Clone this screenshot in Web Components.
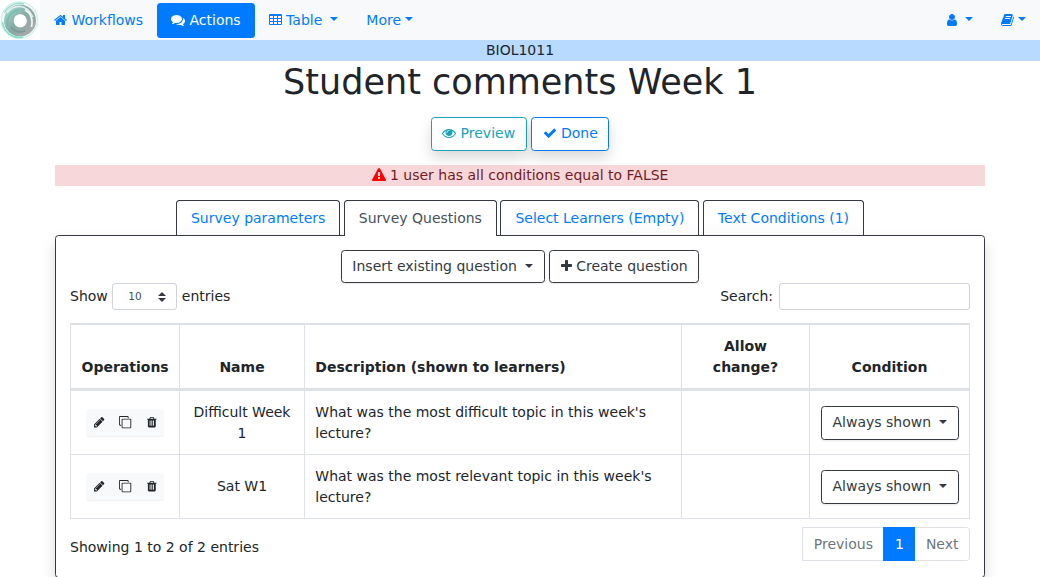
<!DOCTYPE html>
<html lang="en">
<head>
<meta charset="utf-8">
<title>Student comments Week 1</title>
<style>
html{font-size:14px}
body{margin:0;font:14px/1.5 "DejaVu Sans",sans-serif;color:#212529;background:#fff;overflow:hidden}
</style>
</head>
<body>
<app-page></app-page>
<script>
const define = (name, html, setup) => customElements.define(name, class extends HTMLElement {
  connectedCallback() {
    if (this.shadowRoot) return;
    const t = document.createElement('template');
    t.innerHTML = '<style>*{box-sizing:border-box}:host{box-sizing:border-box}</style>' + html;
    this.attachShadow({ mode: 'open' }).append(t.content.cloneNode(true));
    if (setup) setup(this, this.shadowRoot);
  }
});

// Glyphs: left edge, advance width (in 1792 units per em), markup
const ICONS = {
  home: [64, 1664, '<path d="M1472 992v480q0 26-19 45t-45 19h-384v-384h-256v384h-384q-26 0-45-19t-19-45v-480q0-1 .5-3t.5-3l575-474 575 474q1 2 1 6zm223-69l-62 74q-8 9-21 11h-3q-13 0-21-7l-692-577-692 577q-12 8-24 7-13-2-21-11l-62-74q-8-10-7-23.5t11-21.5l719-599q32-26 76-26t76 26l244 204v-195q0-14 9-23t23-9h192q14 0 23 9t9 23v408l219 182q10 8 11 21.5t-7 23.5z"/>'],
  comments: [0, 1792, '<path d="M1408 768q0 139-94 257t-256.5 186.5-353.5 68.5q-86 0-176-16-124 88-278 128-36 9-86 16h-3q-11 0-20.5-8t-11.5-21q-1-3-1-6.5t.5-6.5 2-6l2.5-5 3.5-5.5 4-5 4.5-5 4-4.5q5-6 23-25t26-29.5 22.5-29 25-38.5 20.5-44q-124-72-195-177t-71-224q0-139 94-257t256.5-186.5 353.5-68.5 353.5 68.5 256.5 186.5 94 257zm384 256q0 120-71 224.5t-195 176.5q10 24 20.5 44t25 38.5 22.5 29 26 29.5 23 25q1 1 4 4.5t4.5 5 4 5 3.5 5.5l2.5 5t2 6 .5 6.5-1 6.5q-3 14-13 22t-22 7q-50-7-86-16-154-40-278-128-90 16-176 16-271 0-472-132 58 4 88 4 161 0 309-45t264-129q125-92 192-212t67-254q0-77-23-152 129 71 204 178t75 230z"/>'],
  table: [64, 1664, '<path fill-rule="evenodd" d="M224 128h1344q66 0 113 47t47 113v1088q0 66-47 113t-113 47h-1344q-66 0-113-47t-47-113v-1088q0-66 47-113t113-47zM192 384v256h384v-256zM704 384v256h384v-256zM1216 384v256h384v-256zM192 768v256h384v-256zM704 768v256h384v-256zM1216 768v256h384v-256zM192 1152v256h384v-256zM704 1152v256h384v-256zM1216 1152v256h384v-256z"/>'],
  user: [256, 1280, '<path d="M1536 1399q0 109-62.5 187t-150.5 78h-854q-88 0-150.5-78t-62.5-187q0-85 8.5-160.5t31.5-152 58.5-131 94-89 134.5-34.5q131 128 313 128t313-128q76 0 134.5 34.5t94 89 58.5 131 31.5 152 8.5 160.5zm-256-887q0 159-112.5 271.5t-271.5 112.5-271.5-112.5-112.5-271.5 112.5-271.5 271.5-112.5 271.5 112.5 112.5 271.5z"/>'],
  book: [64, 1664, '<path d="M1703 478q40 57 18 129l-275 906q-19 64-76.5 107.5t-122.5 43.5h-923q-77 0-148.5-53.5t-99.5-131.5q-24-67-2-127 0-4 3-27t4-37q1-8-3-21.5t-3-19.5q2-11 8-21t16.5-23.5 16.5-23.5q23-38 45-91.5t30-91.5q3-10 .5-30t-.5-28q3-11 17-28t17-23q21-36 42-92t25-90q1-9-2.5-32t.5-28q4-13 22-30.5t22-22.5q19-26 42.5-84.5t27.5-96.5q1-8-3-25.5t-2-26.5q2-8 9-18t18-23 17-21q8-12 16.5-30.5t15-35 16-36 19.5-32 26.5-23.5 36-11.5 47.5 5.5l-1 3q38-9 51-9h761q74 0 114 56t18 130l-274 906q-36 119-71.5 153.5t-128.5 34.5h-869q-27 0-38 15-11 16-1 43 24 70 144 70h923q29 0 56-15.5t35-41.5l300-987q7-22 5-57 38 15 59 43zm-1064 2q-4 13 2 22.5t20 9.5h608q13 0 25.5-9.5t16.5-22.5l21-64q4-13-2-22.5t-20-9.5h-608q-13 0-25.5 9.5t-16.5 22.5zm-83 256q-4 13 2 22.5t20 9.5h608q13 0 25.5-9.5t16.5-22.5l21-64q4-13-2-22.5t-20-9.5h-608q-13 0-25.5 9.5t-16.5 22.5z"/>'],
  eye: [0, 1792, '<path d="M1664 960q-152-236-381-353 61 104 61 225 0 185-131.5 316.5t-316.5 131.5-316.5-131.5-131.5-316.5q0-121 61-225-229 117-381 353 133 205 333.5 326.5t434.5 121.5 434.5-121.5 333.5-326.5zm-720-384q0-20-14-34t-34-14q-125 0-214.5 89.5t-89.5 214.5q0 20 14 34t34 14 34-14 14-34q0-86 61-147t147-61q20 0 34-14t14-34zm848 384q0 34-20 69-140 230-376.5 368.5t-499.5 138.5-499.5-139-376.5-368q-20-35-20-69t20-69q140-229 376.5-368t499.5-139 499.5 139 376.5 368q20 35 20 69z"/>'],
  check: [0, 1792, '<path d="M1671 566q0 40-28 68l-724 724-136 136q-28 28-68 28t-68-28l-136-136-362-362q-28-28-28-68t28-68l136-136q28-28 68-28t68 28l294 295 656-657q28-28 68-28t68 28l136 136q28 28 28 68z"/>'],
  warning: [0, 1792, '<path d="M1024 1375v-190q0-14-9.5-23.5t-22.5-9.5h-192q-13 0-22.5 9.5t-9.5 23.5v190q0 14 9.5 23.5t22.5 9.5h192q13 0 22.5-9.5t9.5-23.5zm-2-374l18-459q0-12-10-19-13-11-24-11h-220q-11 0-24 11-10 7-10 21l17 457q0 10 10 16.5t24 6.5h185q14 0 23.5-6.5t10.5-16.5zm-14-934l768 1408q35 63-2 126-17 29-46.5 46t-63.5 17h-1536q-34 0-63.5-17t-46.5-46q-37-63-2-126l768-1408q17-31 47-49t65-18 65 18 47 49z"/>'],
  plus: [192, 1408, '<path d="M1600 736v192q0 40-28 68t-68 28h-416v416q0 40-28 68t-68 28h-192q-40 0-68-28t-28-68v-416h-416q-40 0-68-28t-28-68v-192q0-40 28-68t68-28h416v-416q0-40 28-68t68-28h192q40 0 68 28t28 68v416h416q40 0 68 28t28 68z"/>'],
  pencil: [128, 1536, '<path d="M491 1536l91-91-235-235-91 91v107h128v128h107zm523-928q0-22-22-22-10 0-17 7l-542 542q-7 7-7 17 0 22 22 22 10 0 17-7l542-542q7-7 7-17zm-54-192l416 416-832 832h-416v-416zm683 96q0 53-37 90l-166 166-416-416 166-165q36-38 90-38 53 0 91 38l235 234q37 39 37 91z"/>'],
  clone: [0, 1792, '<path fill-rule="evenodd" d="M544 384h1088q66 0 113 47t47 113v1088q0 66-47 113t-113 47h-1088q-66 0-113-47t-47-113v-1088q0-66 47-113t113-47zM544 512q-32 0-32 32v1088q0 32 32 32h1088q32 0 32-32v-1088q0-32-32-32z"/><path d="M1408 160v160h-128v-160q0-32-32-32h-1088q-32 0-32 32v1088q0 32 32 32h160v128h-160q-66 0-113-47t-47-113v-1088q0-66 47-113t113-47h1088q66 0 113 47t47 113z"/>'],
  trash: [192, 1408, '<path d="M704 1376v-704q0-14-9-23t-23-9h-64q-14 0-23 9t-9 23v704q0 14 9 23t23 9h64q14 0 23-9t9-23zm256 0v-704q0-14-9-23t-23-9h-64q-14 0-23 9t-9 23v704q0 14 9 23t23 9h64q14 0 23-9t9-23zm256 0v-704q0-14-9-23t-23-9h-64q-14 0-23 9t-9 23v704q0 14 9 23t23 9h64q14 0 23-9t9-23zm-544-992h448l-48-117q-7-9-17-11h-317q-10 2-17 11zm928 32v64q0 14-9 23t-23 9h-96v948q0 83-47 143.5t-113 60.5h-832q-66 0-113-58.5t-47-141.5v-952h-96q-14 0-23-9t-9-23v-64q0-14 9-23t23-9h309l70-167q15-37 54-63t79-26h320q40 0 79 26t54 63l70 167h309q14 0 23 9t9 23z"/>']
};

define('fa-icon', `<style>:host{display:inline-block;line-height:1;height:1em;vertical-align:-.143em}svg{display:block;height:1em;fill:currentColor;overflow:visible}</style><div></div>`, (el, root) => {
  const [x, w, d] = ICONS[el.getAttribute('name')];
  root.querySelector('div').innerHTML = `<svg style="width:${w / 1792}em" viewBox="${x} 0 ${w} 1792">${d}</svg>`;
});

define('drop-caret', `<style>:host{display:inline-block;margin-left:.255em;margin-right:var(--caret-end,.4px);vertical-align:var(--caret-rise,.255em);border-top:.3em solid;border-left:.3em solid transparent;border-right:.3em solid transparent}</style>`);

define('brand-logo', `<style>:host{display:block;width:40px;height:40px;background:#fff}svg{display:block}</style>
<svg width="40" height="40" viewBox="0 0 40 40" fill="none">
<defs><linearGradient id="g" x1="0" y1="0" x2="1" y2="1"><stop offset="0" stop-color="#a3cfc6"/><stop offset=".5" stop-color="#86aaa4"/><stop offset="1" stop-color="#a9a9ab"/></linearGradient></defs>
<circle cx="19.500" cy="20" r="18" stroke="#d3f0ea" stroke-width="1.600"/>
<circle cx="20" cy="20.500" r="11" stroke="url(#g)" stroke-width="10"/>
<path d="M4.500 13A16.500 16.500 0 0 1 24 4" stroke="#9fdccf" stroke-width="1.500"/>
<path d="M2.500 22A17.500 17.500 0 0 0 23 37.300" stroke="#7de0cc" stroke-width="1.500"/>
<path d="M7 13Q12 6 20 6.500T33 17" stroke="#e3f3f0" stroke-width="1.400"/>
<path d="M8 27A13 13 0 0 1 19 10" stroke="#62c4b1" stroke-width="1.300"/>
<path d="M25 10Q34 15 31.500 27" stroke="#f2f8f7" stroke-width="1.700"/>
<path d="M11 27Q16 34 25 31" stroke="#7b9994" stroke-width="1.600"/>
<circle cx="20.300" cy="20.800" r="6.600" fill="#fff"/>
</svg>`);

define('nav-link', `<style>:host{display:block;padding:7px 14px;color:#007bff;white-space:nowrap;border-radius:3.5px}:host([active]){background:#007bff;color:#fff}</style><slot></slot>`);

define('nav-bar', `<style>:host{display:flex;height:40px;background:#f8f9fa;align-items:center;--caret-end:0px}.end{margin-left:auto;display:flex}</style>
<brand-logo></brand-logo>
<nav-link><fa-icon name="home"></fa-icon> Workflows</nav-link>
<nav-link active><fa-icon name="comments"></fa-icon> Actions</nav-link>
<nav-link><fa-icon name="table"></fa-icon> Table <drop-caret></drop-caret></nav-link>
<nav-link>More<drop-caret></drop-caret></nav-link>
<div class="end"><nav-link><fa-icon name="user"></fa-icon> <drop-caret></drop-caret></nav-link><nav-link><fa-icon name="book"></fa-icon><drop-caret></drop-caret></nav-link></div>`);

define('ui-button', `<style>:host{display:inline-block;height:var(--button-height,33.5px);padding:5.25px 10.5px;border:1px solid;border-radius:3.5px;color:#343a40;background:#fff;white-space:nowrap;vertical-align:middle;box-shadow:0 1px 2px rgba(0,0,0,.09)}
:host([kind=info]){color:#17a2b8}:host([kind=primary]){color:#007bff}:host([raised]){box-shadow:0 7px 14px rgba(0,0,0,.15)}</style><slot></slot>`);

define('alert-bar', `<style>:host{display:block;text-align:center;background:#f8d7da;color:#721c24}fa-icon{color:red}</style><fa-icon name="warning"></fa-icon> <slot></slot>`);

define('tab-item', `<style>:host{display:block;height:35px;padding:7px 14px 6px;border:1px solid #343a40;border-bottom:0;border-radius:3.5px 3.5px 0 0;color:#007bff;background:linear-gradient(#fff 60%,#fafafa);white-space:nowrap}
:host([active]){color:#495057;background:#fff;height:36px;position:relative;z-index:1}</style><slot></slot>`);
define('tab-bar', `<style>:host{display:flex;justify-content:center;gap:3.5px;height:35px}</style><slot></slot>`);

define('page-size', `<style>:host{display:flex;align-items:center;gap:4.5px}.s{display:flex;align-items:center;justify-content:space-between;width:65px;height:27px;border:1px solid #ced4da;border-radius:3px;padding:1px 10px 0 15px;font-size:10.500px;color:#495057}svg{display:block}</style>
<span>Show</span><span class="s">10<svg width="8" height="10" viewBox="0 0 4 5"><path fill="#343a40" d="M2 0L0 2h4zm0 5L0 3h4z"/></svg></span><span>entries</span>`);
define('search-box', `<style>:host{display:flex;align-items:center;gap:6px}input{width:191px;height:27px;border:1px solid #ced4da;border-radius:3px;background:#fff;padding:3px 7px;font:inherit;margin:0}</style><span>Search:</span><input aria-label="Search">`);

define('row-tools', `<style>:host{display:inline-flex;font-size:12.250px;line-height:18.375px;background:#f8f9fa;border-radius:3px;box-shadow:0 1px 1px rgba(0,0,0,.06);vertical-align:middle;white-space:nowrap}span{padding:4.500px 8px}span+span{margin-left:-1px}</style>
<span><fa-icon name="pencil"></fa-icon></span><span><fa-icon name="clone"></fa-icon></span><span><fa-icon name="trash"></fa-icon></span>`);

define('question-table', `<style>:host{display:block}ui-button{--button-height:34px;--caret-end:.8px;--caret-rise:.2em}
table{border-collapse:separate;border-spacing:0;width:900px;table-layout:fixed;border:1px solid #dee2e6;font:inherit;color:inherit}
th,td{padding:10.500px;border:0 solid #dee2e6;border-top-width:1px;border-right-width:1px;text-align:center;vertical-align:middle}
th{vertical-align:bottom;border-bottom-width:2px;height:66px}td{height:64px}td:last-child{padding:9px 10px 9px 11px}
th:last-child,td:last-child{border-right-width:0}th.l,td.l{text-align:left;padding-left:10.300px}</style>
<table><colgroup><col style="width:109px"><col style="width:125px"><col style="width:377px"><col style="width:128px"><col style="width:159px"></colgroup>
<thead><tr><th>Operations</th><th>Name</th><th class="l">Description (shown to learners)</th><th>Allow change?</th><th>Condition</th></tr></thead>
<tbody></tbody></table>`, (el, root) => {
  const rows = [['Difficult Week 1', "What was the most difficult topic in this week's lecture?"], ['Sat W1', "What was the most relevant topic in this week's lecture?"]];
  root.querySelector('tbody').innerHTML = rows.map(([n, d]) => `<tr><td><row-tools></row-tools></td><td>${n}</td><td class="l">${d}</td><td></td><td><ui-button>Always shown <drop-caret></drop-caret></ui-button></td></tr>`).join('');
});

define('page-nav', `<style>:host{display:flex;line-height:17.500px}span{padding:7.500px 10.500px 6.500px;border:1px solid #dee2e6;color:#6c757d;background:#fff}span+span{margin-left:-1px}.on{background:#007bff;border-color:#007bff;color:#fff;z-index:1}span:first-child{border-radius:3.500px 0 0 3.500px}span:last-child{border-radius:0 3.500px 3.500px 0}</style><span>Previous</span><span class="on">1</span><span>Next</span>`);

define('question-panel', `<style>:host{display:block;height:343px;padding:14px;border:1px solid #343a40;border-radius:3.500px;background:#fff;box-shadow:0 7px 14px rgba(0,0,0,.15)}
.actions{text-align:center;height:33px;--button-height:33px}.row{display:flex;justify-content:space-between}.filters{margin-bottom:13px}.foot{padding-top:8px}.foot p{margin:10px 0 0}</style>
<div class="actions"><ui-button>Insert existing question <drop-caret></drop-caret></ui-button> <ui-button><fa-icon name="plus"></fa-icon> Create question</ui-button></div>
<div class="row filters"><page-size></page-size><search-box></search-box></div>
<question-table></question-table>
<div class="row foot"><p>Showing 1 to 2 of 2 entries</p><page-nav></page-nav></div>`);

define('app-page', `<style>:host{display:block}.course{background:#b8daff;text-align:center;height:21px}h1{margin:0;font-size:35px;line-height:42px;font-weight:400;text-align:center}main{width:930px;margin:0 auto}.buttons{text-align:center;margin-top:14px;height:48px}alert-bar{margin-bottom:14px}</style>
<nav-bar></nav-bar><div class="course">BIOL1011</div><h1>Student comments Week 1</h1>
<main><div class="buttons"><ui-button kind="info" raised><fa-icon name="eye"></fa-icon> Preview</ui-button> <ui-button kind="primary" raised><fa-icon name="check"></fa-icon> Done</ui-button></div>
<alert-bar>1 user has all conditions equal to FALSE</alert-bar>
<tab-bar><tab-item>Survey parameters</tab-item><tab-item active>Survey Questions</tab-item><tab-item>Select Learners (Empty)</tab-item><tab-item>Text Conditions (1)</tab-item></tab-bar>
<question-panel></question-panel></main>`);
</script>
</body>
</html>
